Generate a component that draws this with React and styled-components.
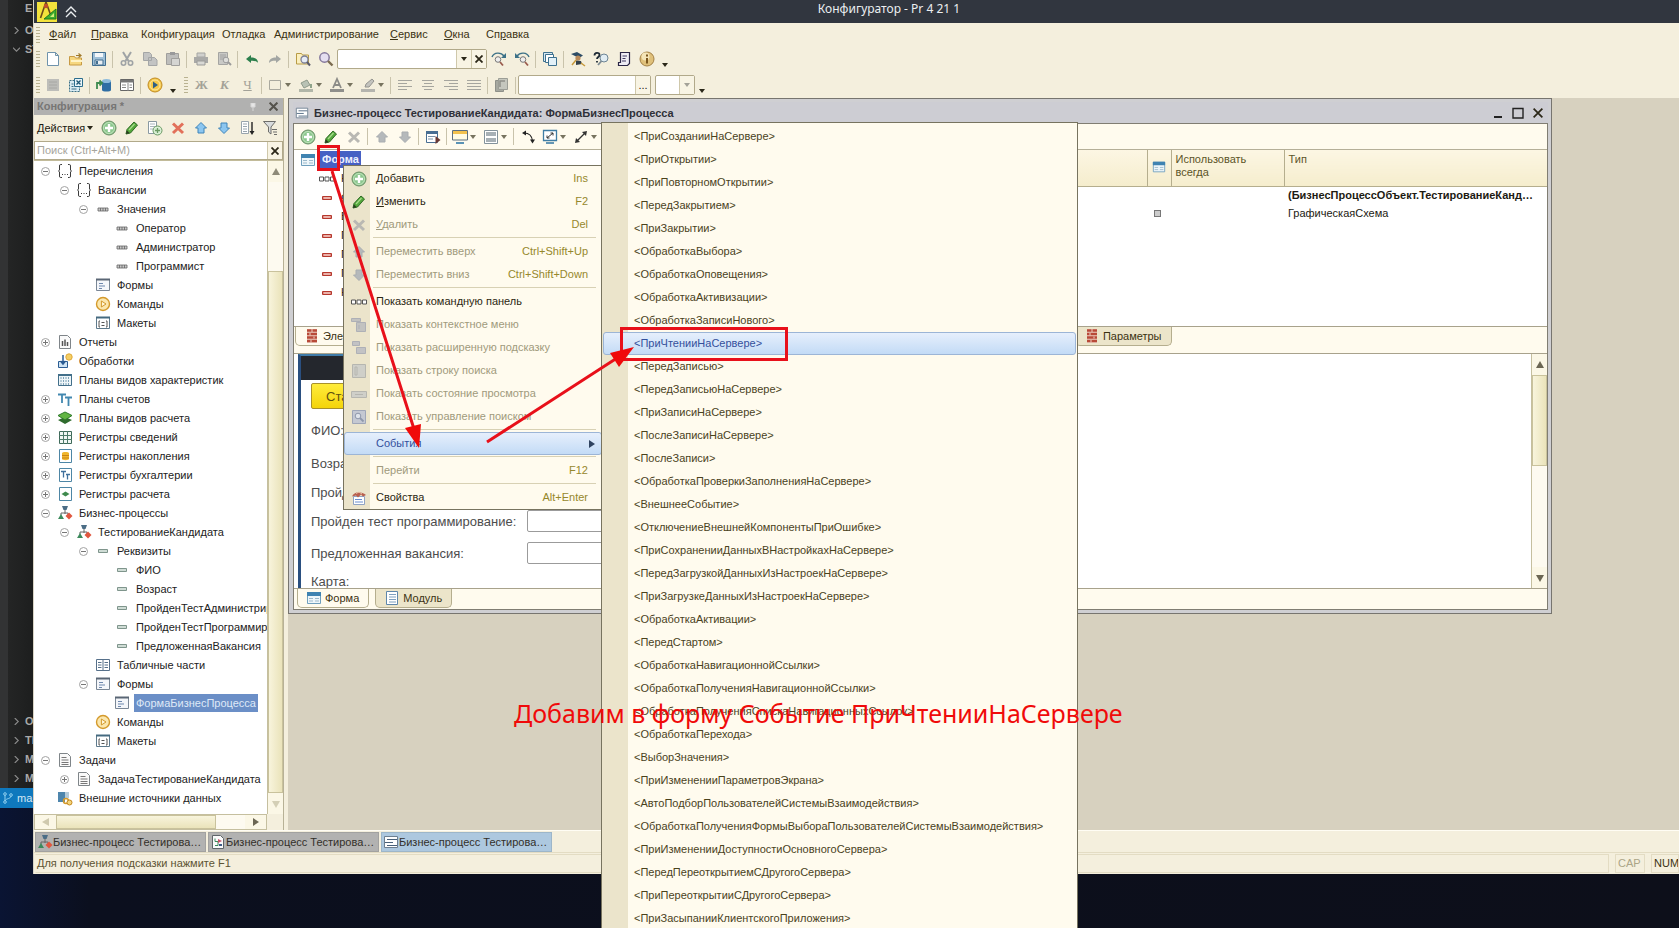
import React from "react";
import styled, { createGlobalStyle } from "styled-components";

const Global = createGlobalStyle`
  * { box-sizing: border-box; }
  html, body { margin: 0; height: 100%; overflow: hidden; }
  body { font: 11px/19px "Liberation Sans", Arial, sans-serif; color: #1c1a12; background: #0b0e19; }
  button, input { font: inherit; color: inherit; margin: 0; }
  ul { list-style: none; margin: 0; padding: 0; }
`;

/* ---------- icons ---------- */

const plusBall = (
  <>
    <circle cx="8" cy="8" r="7" fill="#8cc78e" stroke="#6b8f66" />
    <circle cx="8" cy="8" r="5.5" fill="none" stroke="#c2e4bd" />
    <path d="M8 4v8M4 8h8" stroke="#fff" strokeWidth="2.4" />
  </>
);
const goldBall = (
  <>
    <circle cx="8" cy="8" r="6.5" fill="#fbe7ae" stroke="#d49a2c" strokeWidth="1.4" />
    <path d="M6.4 5l4.6 3-4.6 3z" fill="#fff6d8" stroke="#d49a2c" />
  </>
);
const frame = (stroke, fill) => (
  <path d="M1.5 2.5h13v11h-13z" fill={fill} stroke={stroke} />
);
const process = (
  <>
    <path d="M8 5v4M4 10V8h7v2" stroke="#666" fill="none" />
    <path d="M5 1h6L9.500 5h-3z" fill="#4b6d86" />
    <path d="M1 14l3-5 3 5z" fill="#3c8a5c" />
    <path d="M12 7.500l3.500 3.500-3.500 3.500L8.500 11z" fill="#e0573f" />
  </>
);
const loupe = (
  <>
    <circle cx="9.500" cy="8.500" r="3.500" fill="#e6ecf6" stroke="#7d7f96" strokeWidth="1.3" />
    <path d="M12 11l3 3.500" stroke="#5b5b6b" strokeWidth="2" />
  </>
);

const ICONS = {
  newDoc: <path d="M2.500 1.500h8l3 3v10h-11zM10.500 1.500v3h3" fill="#fff" stroke="#6f93ac" />,
  open: (
    <>
      <path d="M1.500 5.500h5l1 1.500h6v7h-12z" fill="#f6d77f" stroke="#c79a45" />
      <path d="M3 10h11" stroke="#fff3c4" strokeWidth="2" />
      <path d="M8 4.500h4.500M10.500 2.500l2.500 2-2.500 2" fill="none" stroke="#a07a2b" strokeWidth="1.2" />
    </>
  ),
  save: (
    <>
      <path d="M1.500 1.500h13v13h-13z" fill="#9fc0d8" stroke="#426f90" />
      <path d="M4 2h8v4H4z" fill="#f3f7fa" />
      <path d="M4 9h8v5H4z" fill="#e8eef2" stroke="#426f90" />
      <path d="M6 10v3" stroke="#426f90" strokeWidth="2" />
    </>
  ),
  cut: (
    <>
      <path d="M4 1l5.500 9M12 1L6.500 10" stroke="#9fa3a5" strokeWidth="2" />
      <circle cx="4.500" cy="12" r="2.200" fill="none" stroke="#9fa3a5" strokeWidth="1.600" />
      <circle cx="11.500" cy="12" r="2.200" fill="none" stroke="#9fa3a5" strokeWidth="1.600" />
    </>
  ),
  copy: (
    <path d="M1.500 1.500h6l2 2v6h-8zM6.500 6.500h6l2.500 2.500v5.500H6.500z" fill="#c3c4c3" stroke="#a4a6a6" />
  ),
  paste: (
    <>
      <path d="M1.500 2.500h12v11h-12z" fill="#bdbdbb" stroke="#a09f9c" />
      <path d="M5 1h5v3H5z" fill="#99999a" />
      <path d="M6.500 7.500h8v7h-8z" fill="#d5d5d2" stroke="#a09f9c" />
    </>
  ),
  print: (
    <>
      <path d="M4 2h8v4H4z" fill="#d0d0cd" stroke="#a5a5a2" />
      <path d="M1 6h14v6H1z" fill="#a9a9a7" />
      <path d="M4 10h8v4H4z" fill="#d8d8d4" stroke="#9b9b98" />
    </>
  ),
  preview: (
    <>
      <path d="M2.500 1.500h9v12h-9z" fill="#c9c9c6" stroke="#a5a5a2" />
      <path d="M4 4h6M4 6h6M4 8h4" stroke="#a0a0a0" />
      <circle cx="10" cy="9" r="2.800" fill="#dededb" stroke="#9b9b9b" />
      <path d="M12 11l3 3" stroke="#9b9b9b" strokeWidth="2" />
    </>
  ),
  undo: <path d="M2 8l5-4v2.500c4 0 7 1.500 7 5.500-1.500-2-4-2.500-7-2.300V12z" fill="#2c7f4c" />,
  redo: <path d="M14 8L9 4v2.500c-4 0-7 1.500-7 5.500 1.500-2 4-2.500 7-2.300V12z" fill="#a3a6a3" />,
  findFolder: (
    <>
      <path d="M1.500 2.500h5l1 1.500h6v9h-12z" fill="#fbefbd" stroke="#b89b45" />
      {loupe}
    </>
  ),
  find: (
    <>
      <circle cx="6.500" cy="6.500" r="4.700" fill="#e4def0" stroke="#85799c" strokeWidth="1.500" />
      <path d="M10 10l4.500 4.500" stroke="#7b6c50" strokeWidth="2.400" />
    </>
  ),
  findNext: (
    <>
      <path d="M1 6c2-5 9-5 12-1" fill="none" stroke="#3c7187" strokeWidth="1.400" />
      <path d="M15 2v5h-5z" fill="#3c7187" />
      <circle cx="7" cy="8.500" r="2.800" fill="#eee" stroke="#777" />
      <path d="M9 11l3 3.500" stroke="#9a5b4c" strokeWidth="1.800" />
    </>
  ),
  findPrev: (
    <>
      <path d="M15 6C13 1 6 1 3 5" fill="none" stroke="#3c7187" strokeWidth="1.400" />
      <path d="M1 2v5h5z" fill="#3c7187" />
      <circle cx="9" cy="8.500" r="2.800" fill="#eee" stroke="#777" />
      <path d="M11 11l3 3.500" stroke="#9a5b4c" strokeWidth="1.800" />
    </>
  ),
  windows: (
    <>
      <path d="M1.500 1.500h9v9h-9z" fill="#d7e7f0" stroke="#3e718f" />
      <path d="M3.500 3.500h8v8h-8z" fill="#fff" stroke="#3e718f" />
      <path d="M6.500 6.500h8v8h-8z" fill="#e3f1f8" stroke="#3e718f" />
    </>
  ),
  wizard: (
    <>
      <path d="M1 3l6-2 6 3.500L9 7z" fill="#2d4c66" />
      <circle cx="8" cy="7" r="2.600" fill="#b98a5a" />
      <path d="M6 9.500l5 .5 1 3-6 1z" fill="#33404a" />
      <path d="M2 14l4-5M11 12l4 3" stroke="#c89a3c" strokeWidth="1.500" />
    </>
  ),
  helpFind: (
    <>
      <path d="M1.500 4.500c0-3.500 5-3.500 5-.5 0 2-2.500 2-2.500 4M4 10v1.500" fill="none" stroke="#1e2a35" strokeWidth="1.800" />
      <circle cx="11" cy="7" r="4" fill="#e1edf3" stroke="#6d8494" />
      <path d="M8.500 10l-3.500 4" stroke="#7d8b93" strokeWidth="1.800" />
    </>
  ),
  syntax: (
    <>
      <path d="M4.500 1.500h9v11l-2 2h-9v-3h2z" fill="#eeecf4" stroke="#2b2646" strokeWidth="1.200" />
      <path d="M6.500 5H11M6.500 7.500h3M6 10h4" stroke="#3f3960" />
    </>
  ),
  info: (
    <>
      <circle cx="8" cy="8" r="7" fill="#dfc07a" stroke="#a48145" />
      <circle cx="6.500" cy="5.500" r="4" fill="#f4e5b8" />
      <path d="M8 7v5.500M8 3.500v2" stroke="#7a561d" strokeWidth="2" />
    </>
  ),
  greyBox: (
    <>
      <path d="M2 2h12v12H2z" fill="#bdbdb9" />
      <path d="M4 5h8M4 8h8M4 11h8" stroke="#a8a8a4" />
    </>
  ),
  tableX: (
    <>
      <path d="M1.500 3.500h10v11h-10z" fill="#d9ebf2" stroke="#3a6f86" strokeDasharray="2 1" />
      <path d="M6.500 1.500h8v8h-8z" fill="#e9f4f8" stroke="#2b6d8d" />
      <path d="M8.500 3.500l4 4M12.500 3.500l-4 4" stroke="#1d5876" strokeWidth="1.300" />
      <path d="M3.500 7h2M3.500 9.500h2M3.500 12h5" stroke="#3a6f86" />
    </>
  ),
  database: (
    <>
      <path d="M6 4v9c0 2 9 2 9 0V4z" fill="#2f6ea4" />
      <ellipse cx="10.500" cy="4" rx="4.500" ry="2" fill="#8cbbdc" />
      <path d="M1 12V6h4M3.500 3.500L6 6 3.500 8.500" fill="none" stroke="#3e8b50" strokeWidth="1.800" />
    </>
  ),
  panelTable: (
    <>
      <path d="M1.500 2.500h13v11h-13z" fill="#fff" stroke="#666" />
      <path d="M1 3h14v2.500H1z" fill="#777" />
      <path d="M9 6v8M3 8h4M3 10.500h4M10.500 8H13M10.500 10.500H13" stroke="#888" />
    </>
  ),
  run: (
    <>
      <circle cx="8" cy="8" r="7" fill="#f4c84a" stroke="#c08a22" />
      <circle cx="8" cy="8" r="5" fill="none" stroke="#fbe8a5" />
      <path d="M6 4.500l5 3.500-5 3.500z" fill="#2c5f86" />
    </>
  ),
  rect: <path d="M2.500 3.500h11v9h-11z" fill="none" stroke="#aaa99f" />,
  bucket: (
    <>
      <path d="M3 6l6-3 3 5-6 3z" fill="#b9c2b5" stroke="#8f9a8b" />
      <path d="M13 7v4" stroke="#8fa48b" strokeWidth="2" />
      <path d="M1 12h14v3H1z" fill="#b1b6a8" />
    </>
  ),
  fontColor: (
    <>
      <path d="M4 11l4-9 4 9M5.500 8h5" fill="none" stroke="#8b8b87" strokeWidth="1.800" />
      <path d="M1 12h14v3H1z" fill="#8f8f8b" />
    </>
  ),
  penColor: (
    <>
      <path d="M5 10l1-3 6-5 2 2-5 6z" fill="#c3c3be" stroke="#94948f" />
      <path d="M1 12h14v3H1z" fill="#b4b4ae" />
    </>
  ),
  alignL: <path d="M1 3.500h14M1 6.500h9M1 9.500h14M1 12.500h9" stroke="#a5a59e" />,
  alignC: <path d="M2 3.500h12M4 6.500h8M2 9.500h12M4 12.500h8" stroke="#a5a59e" />,
  alignR: <path d="M1 3.500h14M6 6.500h9M1 9.500h14M6 12.500h9" stroke="#a5a59e" />,
  alignJ: <path d="M1 3.500h14M1 6.500h14M1 9.500h14M1 12.500h14" stroke="#a5a59e" />,
  stack: (
    <>
      <path d="M1.500 3.500h8v11h-8z" fill="#a6a8a0" stroke="#8e9089" />
      <path d="M4.500 1.500h9v11h-9z" fill="#c5c7be" stroke="#9c9e96" />
      <path d="M6 10V4h5" fill="none" stroke="#8e9089" strokeWidth="1.500" />
    </>
  ),
  add: plusBall,
  edit: (
    <>
      <path d="M2 14l1-4.500L10 2l3.500 3L6.500 13z" fill="#54a83c" stroke="#2f6a25" />
      <path d="M2 14l1-3.500 2.500 2.500z" fill="#2d3b22" />
      <path d="M5 10l5.500-6" stroke="#a8dc8c" strokeWidth="1.200" />
    </>
  ),
  addDoc: (
    <>
      <path d="M1.500 1.500h8v12h-8z" fill="#fff" stroke="#8a99a2" />
      <path d="M3 4h5M3 6.500h5M3 9h3" stroke="#a9b4bb" />
      <circle cx="10.500" cy="10.500" r="4.500" fill="#d9efd5" stroke="#6b9a64" />
      <path d="M10.500 8v5M8 10.500h5" stroke="#6b9a64" strokeWidth="1.300" />
    </>
  ),
  remove: <path d="M3 3.500l10 9.500M13 3.500L3 13" stroke="#e2705a" strokeWidth="3" />,
  removeOff: <path d="M3 3.500l10 9.500M13 3.500L3 13" stroke="#b9b8b3" strokeWidth="3" />,
  up: <path d="M8 2.500l5.500 5.500H11v5H5V8H2.500z" fill="#8cc6f0" stroke="#3f84b9" />,
  down: <path d="M8 13.500L2.500 8H5V3h6v5h2.500z" fill="#8cc6f0" stroke="#3f84b9" />,
  upOff: <path d="M8 2.500l5.500 5.500H11v5H5V8H2.500z" fill="#b5b9bb" stroke="#a9adb0" />,
  downOff: <path d="M8 13.500L2.500 8H5V3h6v5h2.500z" fill="#b5b9bb" stroke="#a9adb0" />,
  sort: (
    <>
      <path d="M2.500 1.500h7v12h-7z" fill="#fff" stroke="#98a4ad" />
      <path d="M4 4h4M4 6.500h4M4 9h4M4 11.500h4" stroke="#98a4ad" />
      <path d="M13 2v10" stroke="#222" strokeWidth="1.400" />
      <path d="M10.500 11h5L13 15z" fill="#222" />
    </>
  ),
  filter: (
    <>
      <path d="M1.500 1.500h12L9 7v7l-2.500-2V7z" fill="#d9dcdd" stroke="#6d6d6a" />
      <path d="M10 9.500h5M11 12h4M12 14.500h3" stroke="#6d6d6a" />
    </>
  ),
  formExec: (
    <>
      <path d="M1.500 2.500h11v11h-11z" fill="#fff" stroke="#486e93" />
      <path d="M1 2h12v3H1z" fill="#486e93" />
      <path d="M3 7.500h7M3 10h5" stroke="#7b93a9" />
      <path d="M10.500 7l5 4-5 4z" fill="#6a3a36" />
    </>
  ),
  screen: (
    <>
      <path d="M.5 1.500h15v9.500H.5z" fill="#fffbe2" stroke="#5b6f7f" />
      <path d="M1 2h14v3H1z" fill="#f2c14c" />
      <path d="M4 14h8" stroke="#5b93b5" strokeWidth="2" />
    </>
  ),
  layout: (
    <>
      <path d="M1.500 1.500h13v13h-13z" fill="#fff" stroke="#83929b" />
      <path d="M3 3h10v4H3zM3 9h10v4H3z" fill="#a7b0b5" />
    </>
  ),
  link: (
    <>
      <path d="M4 4c5 0 8 3 8.500 8" fill="none" stroke="#222" strokeWidth="1.200" />
      <path d="M2 4l4-2.500v5zM10 10.500h5l-2.500 4z" fill="#222" />
    </>
  ),
  fit: (
    <>
      <path d="M1.500 1.500h13v10h-13z" fill="#fff" stroke="#3f7da5" strokeWidth="1.300" />
      <path d="M5 9l6-5M5 6.500V9h2.500M8.500 4H11v2.500" fill="none" stroke="#333" />
      <path d="M4 14h8" stroke="#3f7da5" strokeWidth="1.600" />
    </>
  ),
  diag: (
    <>
      <path d="M4 12l8-8" stroke="#333" strokeWidth="1.300" />
      <path d="M2 14l1-5 4 4zM14 2l-1 5-4-4z" fill="#333" />
    </>
  ),
  form: (
    <>
      <path d="M1.500 2.500h13v11h-13z" fill="#eef6fa" stroke="#6f9fbd" />
      <path d="M1 2h14v4H1z" fill="#3f83b1" />
      <path d="M3 8.500h4M9 8.500h4M3 11h4M9 11h4" stroke="#9cb9cb" />
    </>
  ),
  formList: (
    <>
      {frame("#6d7f90", "#fff")}
      <path d="M4 5.500h10M2 8.500h8M4 11.500h10" stroke="#48607a" />
    </>
  ),
  braces: (
    <path
      d="M5 1.500H3.500Q2.500 1.500 2.500 3v4l-1 1 1 1v4q0 1.500 1 1.500H5M11 1.500h1.500q1 0 1 1.500v4l1 1-1 1v4q0 1.500-1 1.500H11M5 11.500h1M7.500 11.500h1M10 11.500h1"
      fill="none"
      stroke="#3c3c3c"
    />
  ),
  valueDots: <path d="M3 7h10v3H3zM5.500 7v3M8 7v3M10.500 7v3" fill="#c9c9c9" stroke="#666" strokeWidth=".8" />,
  attr: <path d="M3.500 6.500h9v3h-9z" fill="#cfdcd5" stroke="#7f958c" />,
  forms: (
    <>
      {frame("#7a8796", "#f4f6fa")}
      <path d="M1 2.500h14" stroke="#5a6675" strokeWidth="2" />
      <path d="M4 6.500h4M4 9h6M4 11.500h3" stroke="#6d87ad" />
    </>
  ),
  commands: goldBall,
  layouts: (
    <>
      {frame("#5f7a8c", "#fff")}
      <path d="M1 2.500h14" stroke="#456a80" strokeWidth="2" />
      <path d="M5 6H4v6h1M11 6h1v6h-1M6.500 7.500h3M6.500 10.500h3" fill="none" stroke="#555" />
    </>
  ),
  report: (
    <>
      <path d="M2.500 1.500h8l3 3v10h-11z" fill="#fafafa" stroke="#7f8589" />
      <path d="M5.500 12V7M8 12V5.500M10.500 12V8" stroke="#555" strokeWidth="1.500" />
    </>
  ),
  mapDoc: (
    <>
      <path d="M2.500 1.500h8l3 3v10h-11z" fill="#fafafa" stroke="#5f6569" />
      <path d="M5 4.500v3h3v4M5 11.500h3" fill="none" stroke="#3c8a5c" />
      <path d="M8 5l4 2-4 2z" fill="#c9506a" />
      <path d="M9 11h3" stroke="#3d5a86" strokeWidth="2" />
    </>
  ),
  processing: (
    <>
      <path d="M1.500 8.500h9v6h-9z" fill="#cfe4f4" stroke="#2a5c93" />
      <path d="M6 2v8M3.500 8L6 11l2.500-3" fill="none" stroke="#2a5c93" strokeWidth="1.500" />
      <circle cx="12" cy="4" r="3.200" fill="#f4cf66" stroke="#e0a93a" />
    </>
  ),
  grid: (
    <>
      {frame("#426f8a", "#eef5f8")}
      <path d="M1 3h14" stroke="#426f8a" strokeWidth="2" />
      <path d="M4 5v8M6.500 5v8M9 5v8M11.500 5v8" stroke="#7fa3b8" strokeDasharray="2 1" />
    </>
  ),
  accounts: <path d="M1 3.500h8M5 3v9M8 6.500h7M11.500 6v9" stroke="#4288b0" strokeWidth="1.800" fill="none" />,
  layers: (
    <>
      <path d="M8 7l7 3-7 4-7-4z" fill="#2f6b2d" />
      <path d="M8 2l7 3.500L8 10 1 5.500z" fill="#62b543" stroke="#2f7a2b" />
    </>
  ),
  regInfo: (
    <>
      <path d="M2.500 2.500h12v12h-12z" fill="#f1f7f4" stroke="#3f6a5a" />
      <path d="M2 6.500h13M2 10.500h13M6.500 2v13M10.500 2v13" stroke="#4d7a69" />
    </>
  ),
  regAcc: (
    <>
      <path d="M2.500 1.500h12v13h-12z" fill="#fff" stroke="#4e86a5" />
      <path d="M5 5c0-1.500 7-1.500 7 0v6c0 1.500-7 1.500-7 0z" fill="#f0b62e" />
      <path d="M5 7.500h7M5 10h7" stroke="#c98214" />
    </>
  ),
  regBook: (
    <>
      <path d="M2.500 1.500h12v13h-12z" fill="#fff" stroke="#4e86a5" />
      <path d="M4 4.500h5M6.500 4.500v6M9 7.500h4M10.500 7.500v5" stroke="#3f6f9b" strokeWidth="1.300" fill="none" />
    </>
  ),
  regCalc: (
    <>
      <path d="M2.500 1.500h12v13h-12z" fill="#fff" stroke="#4e86a5" />
      <path d="M8.500 5.500L12.500 8l-4 2.500L4.500 8z" fill="#3f8a4d" />
    </>
  ),
  process,
  tabular: (
    <>
      {frame("#56708a", "#fff")}
      <path d="M8 2v12M3 5.500h3.500M3 8h3.500M3 10.500h3.500M9.500 5.500H13M9.500 8H13M9.500 10.500H13" stroke="#56708a" />
    </>
  ),
  task: (
    <>
      <path d="M2.500 1.500h8l3 3v10h-11z" fill="#fafafa" stroke="#7f8589" />
      <path d="M4.500 5.500h5M4.500 8h7M4.500 10.500h7M4.500 12.500h7" stroke="#777" />
    </>
  ),
  external: (
    <>
      <path d="M1 2h7v10H1z" fill="#4e86ad" />
      <path d="M8 2h4v6H8z" fill="#b5cbd9" />
      <circle cx="9" cy="11" r="2.500" fill="none" stroke="#d49a2c" strokeWidth="1.500" />
      <circle cx="12.500" cy="12.500" r="2.500" fill="#f3d47c" stroke="#c4871a" />
    </>
  ),
  redDash: (
    <>
      <path d="M3.500 6.500h9v3h-9z" fill="#e08a80" stroke="#b5382e" />
      <path d="M5 8h6" stroke="#f6d9d4" />
    </>
  ),
  cmdBar: <path d="M.5 6h4v4h-4zM6 6h4v4H6zM11.500 6h4v4h-4z" fill="#fff" stroke="#555" />,
  bricks: (
    <>
      <path d="M3 1h10v14H3z" fill="#eccfc0" />
      <path d="M3 2.500h10M3 6h10M3 9.500h10M3 13h10" stroke="#b84a38" strokeWidth="2.400" />
      <path d="M8 1v3M6 5v2.500M10 8.500v2M7 12v2.500" stroke="#eccfc0" />
    </>
  ),
  module: (
    <>
      <path d="M2.500 1.500h11v13h-11z" fill="#fff" stroke="#5f87ab" />
      <path d="M5 4.500h7M5 7h7M5 9.500h7M5 12h7" stroke="#7fa0bf" />
    </>
  ),
  mContext: <path d="M.5 1.500h9v3h-9zM5.500 5.500h9v9h-9zM8 8v4" fill="#c2c2c0" stroke="#aeb0b6" />,
  mHint: <path d="M1.500 1.500h7v4h-7zM5.500 7.500h9v6h-9z" fill="#c2c2c4" stroke="#aeb0b6" />,
  mSearch: <path d="M1.500 1.500h13v13h-13zM4 4h2v8H4z" fill="#cfcfc9" stroke="#b6b6b0" />,
  mState: <path d="M.5 5.500h15v6H.5zM4 8.500h8" fill="#cfcfc9" stroke="#b6b6b0" />,
  mControl: (
    <>
      <path d="M1.500 1.500h13v13h-13z" fill="#c4c8d2" stroke="#9fa6b8" />
      <circle cx="7" cy="7" r="2.800" fill="#dfe3ea" stroke="#8e97ab" />
      <path d="M9 9l3.500 3.500" stroke="#8e97ab" strokeWidth="1.800" />
    </>
  ),
  props: (
    <>
      <path d="M2.500 6.500h11v8h-11z" fill="#fff" stroke="#8fa3c4" />
      <path d="M4 9.500h7M4 12h8" stroke="#6b8fd0" />
      <path d="M1 6.500c1.500-4 8-6.500 14-1.500l-3 1.500-2-2-3 3-2-2z" fill="#b8604f" />
      <path d="M5 3.500l3-1.500 3 2" fill="none" stroke="#e9c3a8" />
    </>
  ),
};

const Svg = styled.svg`
  width: ${(p) => p.$size || 16}px;
  height: ${(p) => p.$size || 16}px;
  flex: none;
  display: block;
`;
const Icon = ({ name, size }) => (
  <Svg viewBox="0 0 16 16" $size={size} aria-hidden="true">
    {ICONS[name]}
  </Svg>
);

const Caret = styled.i`
  flex: none;
  width: 0;
  height: 0;
  border: 3px solid transparent;
  border-top: 4px solid ${(p) => p.$color || "#2a2718"};
  border-bottom: 0;
`;

/* ---------- page and editor behind ---------- */

const Page = styled.div`
  position: relative;
  display: flex;
  height: 100vh;
  overflow: hidden;
  background: linear-gradient(90deg, #0a1433 0, #0b0f1e 90px, #0d0f1a 100%);
`;
const Editor = styled.aside`
  flex: none;
  width: 33px;
  height: calc(100vh - 120px);
  display: flex;
  flex-direction: column;
  overflow: hidden;
  background: linear-gradient(90deg, #323334 8px, #242525 8px, #1d1e1e 100%);
  color: #a9a9a9;
  font-weight: bold;
`;
const EditorRow = styled.div`
  flex: none;
  height: 19px;
  display: flex;
  align-items: center;
  gap: 5px;
  padding-left: 13px;
  white-space: nowrap;
  svg { color: #8a8a8a; }
`;
const EditorTab = styled(EditorRow)`
  height: 21px;
  padding: 0 0 4px 25px;
`;
const EditorGap = styled.div`
  flex: 1;
`;
const EditorStatus = styled(EditorRow)`
  height: 20px;
  padding-left: 2px;
  gap: 3px;
  background: #0f78bd;
  color: #d4e8f5;
  font-weight: normal;
  svg { color: #8fd0f0; }
`;
const Chevron = ({ open }) => (
  <Svg viewBox="0 0 8 8" $size={7} aria-hidden="true">
    <path d={open ? "M0 2l4 4 4-4" : "M2 0l4 4-4 4"} fill="none" stroke="currentColor" strokeWidth="1.300" />
  </Svg>
);

/* ---------- main window ---------- */

const AppWindow = styled.div`
  flex: 1;
  min-width: 0;
  height: calc(100vh - 54px);
  display: flex;
  flex-direction: column;
  background: #f4efdd;
  border-left: 1px solid #d8d4c6;
`;
const TitleBar = styled.header`
  flex: none;
  height: 23px;
  display: flex;
  align-items: center;
  padding-left: 3px;
  background: #31363f;
  color: #eceff1;
  font: 12px/16px "Noto Sans", sans-serif;
  gap: 8px;
`;
const WindowTitle = styled.h1`
  flex: 1;
  margin: 0;
  padding: 0 0 6px 14px;
  font: inherit;
  text-align: center;
`;
const MenuBar = styled.nav`
  flex: none;
  height: 23px;
  display: flex;
  align-items: center;
  padding-left: 2px;
  color: #3b3212;
`;
const MenuButton = styled.button`
  width: ${(p) => p.$w}px;
  padding: 0;
  border: 0;
  background: none;
  text-align: left;
  white-space: nowrap;
`;
const Grip = styled.i`
  flex: none;
  width: 4px;
  height: 16px;
  margin: ${(p) => p.$margin || "0 2px 0 0"};
  background: repeating-linear-gradient(#b9b290 0 1px, transparent 1px 3px);
`;
const Bar = styled.div`
  flex: none;
  height: ${(p) => p.$h || 26}px;
  display: flex;
  align-items: center;
  padding-left: ${(p) => p.$pad || 2}px;
  border-bottom: ${(p) => (p.$line ? "1px solid #b5af98" : "0")};
`;
const Tool = styled.button`
  flex: none;
  width: 23px;
  height: 22px;
  display: flex;
  align-items: center;
  justify-content: center;
  padding: 0;
  border: 0;
  background: none;
  color: #a3a298;
  font: ${(p) => p.$font || "bold 13px"} "Liberation Serif", serif;
`;
const DropTool = styled(Tool)`
  width: 31px;
  justify-content: flex-start;
  padding-left: 3px;
  gap: 2px;
`;
const MoreTool = styled(Tool)`
  width: 14px;
  align-items: flex-end;
  padding-bottom: 3px;
`;
const Sep = styled.i`
  flex: none;
  width: 1px;
  height: 17px;
  margin: 0 2px;
  background: #c9c3ab;
`;
const Combo = styled.div`
  flex: none;
  display: flex;
  width: ${(p) => p.$w}px;
  height: 20px;
  margin-right: ${(p) => p.$after || 0}px;
  border: 1px solid #b1a98a;
  border-radius: 2px;
  background: #fff;
`;
const ComboInput = styled.input`
  flex: 1;
  min-width: 0;
  padding: 0 2px;
  border: 0;
  outline: 0;
  background: none;
`;
const ComboButton = styled.button`
  flex: none;
  width: 15px;
  display: flex;
  align-items: center;
  justify-content: center;
  padding: 0;
  border: 0;
  border-left: 1px solid #cfc8ab;
  background: #f8f4e4;
`;
const Cross = ({ size = 8, color = "#2b2718", weight = 1.8 }) => (
  <Svg viewBox="0 0 8 8" $size={size} aria-hidden="true">
    <path d="M.5.5l7 7M7.500.5l-7 7" stroke={color} strokeWidth={weight} />
  </Svg>
);

const Workspace = styled.div`
  flex: 1;
  min-height: 0;
  display: flex;
`;

/* ---------- configuration panel ---------- */

const SidePanel = styled.section`
  flex: none;
  width: 250px;
  display: flex;
  flex-direction: column;
  margin-right: 4px;
  border-right: 1px solid #b7b196;
`;
const PanelTitle = styled.h2`
  flex: none;
  display: flex;
  align-items: center;
  gap: 12px;
  height: 17px;
  margin: 0;
  padding: 0 5px 0 3px;
  background: #b1b1b0;
  color: #777675;
  font: bold 11px/17px "Liberation Sans", sans-serif;
  span { flex: 1; }
`;
const ActionsButton = styled.button`
  width: 60px;
  display: flex;
  align-items: center;
  gap: 2px;
  padding: 0;
  border: 0;
  background: none;
  white-space: nowrap;
`;
const Search = styled(Combo)`
  width: auto;
  height: 19px;
  border-radius: 0;
  input::placeholder { color: #a6a59c; opacity: 1; }
`;
const TreeArea = styled.div`
  flex: 1;
  min-height: 0;
  display: flex;
  border-top: 1px solid #c2bb9a;
  background: #fff;
`;
const Tree = styled.ul`
  flex: 1;
  min-width: 0;
  overflow: hidden;
  color: #222;
`;
const TreeRow = styled.li`
  display: flex;
  align-items: center;
  height: 19px;
  padding-left: ${(p) => 4 + p.$level * 19}px;
  white-space: nowrap;
`;
const Expander = styled.button`
  flex: none;
  width: 14px;
  height: 14px;
  margin-right: 5px;
  padding: 0;
  border: 0;
  background: none;
  visibility: ${(p) => (p.$none ? "hidden" : "visible")};
`;
const NodeLabel = styled.span`
  margin-left: 4px;
  padding: 0 2px;
  line-height: 18px;
  color: ${(p) => (p.$selected ? "#dfe9f7" : "inherit")};
  background: ${(p) => (p.$selected ? "#6b8fc7" : "none")};
`;
const Node = ({ level, state, icon, label, selected }) => (
  <TreeRow $level={level}>
    <Expander $none={!state} aria-label={state === "+" ? "Развернуть" : "Свернуть"}>
      <Svg viewBox="0 0 14 14" $size={14}>
        <circle cx="7.500" cy="7.500" r="4" fill="#fff" stroke="#a3a3a3" />
        <path d={state === "+" ? "M5 7.500h5M7.500 5v5" : "M5 7.500h5"} stroke="#777" />
      </Svg>
    </Expander>
    <Icon name={icon} />
    <NodeLabel $selected={selected}>{label}</NodeLabel>
  </TreeRow>
);

const ScrollV = styled.div`
  flex: none;
  width: 16px;
  display: flex;
  flex-direction: column;
  border-left: 1px solid #c5bf9f;
  background: #fdfaf0;
`;
const ScrollH = styled.div`
  flex: none;
  height: 16px;
  display: flex;
  margin-right: 16px;
  border: 1px solid #c5bf9f;
  background: #fdfaf0;
`;
const Arrow = styled.button`
  flex: none;
  width: ${(p) => (p.$wide ? 21 : 15)}px;
  height: ${(p) => (p.$wide ? 14 : 21)}px;
  display: flex;
  align-items: center;
  justify-content: center;
  padding: 0;
  border: 0;
  background: #fbf7e6;
`;
const Thumb = styled.div`
  flex: none;
  border: 1px solid #c9c29c;
  width: ${(p) => p.$w || "auto"};
  height: ${(p) => p.$h || "auto"};
  background: linear-gradient(${(p) => (p.$w ? "180deg" : "90deg")}, #f8f4dc, #eae3ba);
`;
const Space = styled.div`
  flex: 1;
`;
const Tri = ({ d, color = "#6b6653" }) => (
  <Svg viewBox="0 0 8 8" $size={8} aria-hidden="true">
    <path d={d} fill={color} />
  </Svg>
);
const TRI = { up: "M0 7h8L4 0z", down: "M0 1h8L4 8z", left: "M7 0v8L0 4z", right: "M1 0v8l6-4z" };

/* ---------- child window ---------- */

const Mdi = styled.main`
  flex: 1;
  min-width: 0;
  display: flex;
  align-items: flex-start;
  background: #d7d1bf;
`;
const ChildWindow = styled.section`
  width: calc(100% - 127px);
  padding: 3px 3px 3px 4px;
  border: 1px solid #77756f;
  background: #cfcfd2;
`;
const ChildTitle = styled.h2`
  display: flex;
  align-items: center;
  height: 21px;
  margin: 0;
  padding: 0 0 0 2px;
  background: #cdcdd3;
  color: #2e3038;
  font: bold 11px/20px "Liberation Sans", sans-serif;
  span { flex: 1; padding-left: 5px; }
`;
const CaptionButton = styled.button`
  width: 20px;
  height: 18px;
  display: flex;
  align-items: center;
  justify-content: center;
  padding: 0;
  border: 0;
  background: none;
`;
const ChildBody = styled.div`
  border: 1px solid #807d72;
  background: #fffbee;
`;
const TopPanes = styled.div`
  display: flex;
  height: 229px;
`;
const Pane = styled.div`
  flex: ${(p) => p.$flex};
  min-width: 0;
  display: flex;
  flex-direction: column;
`;
const ElementList = styled.ul`
  flex: 1;
  padding-left: 6px;
  border-bottom: 1px solid #a8a28c;
  background: #fff;
`;
const ElementRow = styled.li`
  display: flex;
  align-items: center;
  gap: ${(p) => (p.$root ? 4 : 6)}px;
  height: 19px;
  padding-left: ${(p) => (p.$root ? 0 : 19)}px;
  white-space: nowrap;
`;
const Selected = styled.strong`
  padding: 0 2px;
  line-height: 17px;
  background: #4660c4;
  color: #eef1ff;
`;
const TabStrip = styled.div`
  flex: none;
  display: flex;
  align-items: flex-start;
  gap: 6px;
  height: ${(p) => p.$h}px;
  padding-left: ${(p) => p.$pad}px;
`;
const Tab = styled.button`
  display: flex;
  align-items: center;
  gap: 3px;
  height: 19px;
  padding: 0 9px 0 8px;
  border: 1px solid #b5ae8e;
  border-top: 0;
  border-radius: 0 0 5px 5px;
  background: ${(p) => (p.$active ? "#fffbee" : "#ece5ca")};
  color: #3b3212;
`;
const DataTable = styled.table`
  width: 100%;
  border-collapse: collapse;
  table-layout: fixed;
  th {
    height: 36px;
    padding: 3px 4px;
    border-right: 1px solid #b5ae8e;
    border-bottom: 1px solid #b5ae8e;
    background: linear-gradient(#fcf6e3, #f5edcd);
    font-weight: normal;
    line-height: 13px;
    text-align: left;
    vertical-align: top;
    color: #5c5428;
  }
  th:last-child { border-right: 0; }
  td {
    height: 19px;
    padding: 0 9px 0 4px;
    overflow: hidden;
    text-overflow: ellipsis;
    line-height: 17px;
    vertical-align: top;
    white-space: nowrap;
  }
  tr:first-child td { font-weight: bold; }
`;
const TableArea = styled.div`
  flex: 1;
  border-bottom: 1px solid #a8a28c;
  background: #fff;
`;
const IconHead = styled.div`
  display: flex;
  padding-top: 7px;
`;
const Check = styled.input`
  appearance: none;
  display: block;
  width: 7px;
  height: 7px;
  margin: 5px 3px;
  border: 1px solid #777;
  background: #ccc;
`;
const PreviewArea = styled.div`
  display: flex;
  height: 236px;
  border-top: 1px solid #a8a28c;
  border-bottom: 1px solid #a8a28c;
  background: #fff;
`;
const FormPreview = styled.form`
  width: 56%;
  margin-left: 4px;
  overflow: hidden;
  border-left: 3px solid #2a4f80;
  border-top: 2px solid #3f7ba8;
  color: #4d4d4d;
  font-size: 13px;
`;
const FormHeader = styled.div`
  height: 24px;
  margin-bottom: 3px;
  background: #24272d;
`;
const StartButton = styled.button`
  display: block;
  height: 26px;
  margin: 0 0 5px 10px;
  padding: 0 14px;
  border: 1px solid #a8912c;
  border-radius: 2px;
  background: linear-gradient(#ffec3c, #f4d40a);
  color: #5e4f10;
`;
const Field = styled.label`
  display: flex;
  align-items: center;
  height: ${(p) => p.$h}px;
  padding-left: 10px;
  white-space: nowrap;
  span { width: 216px; }
  input { width: 280px; height: 22px; border: 1px solid #9b9b9b; border-radius: 2px; }
`;

/* ---------- bottom bars ---------- */

const TaskBar = styled.div`
  flex: none;
  display: flex;
  gap: 2px;
  height: 22px;
  padding: 1px 0 0 1px;
  border-top: 1px solid #fffdf4;
`;
const TaskButton = styled.button`
  width: 171px;
  height: 20px;
  display: flex;
  align-items: center;
  padding: 0 1px;
  border: 1px solid ${(p) => (p.$active ? "#9db6c9" : "#a2a2a0")};
  background: ${(p) => (p.$active ? "#adc8df" : "#b2b2b1")};
  color: #33302a;
  span { flex: 1; overflow: hidden; text-overflow: ellipsis; white-space: nowrap; text-align: left; }
`;
const StatusBar = styled.footer`
  flex: none;
  display: flex;
  align-items: center;
  gap: 6px;
  height: 22px;
  padding: 0 0 1px 1px;
  border-top: 1px solid #e3dcc3;
  color: #5c5333;
`;
const StatusCell = styled.span`
  flex: ${(p) => (p.$grow ? 1 : "none")};
  width: ${(p) => p.$w || "auto"};
  height: 19px;
  padding-left: ${(p) => (p.$grow ? 1 : 2)}px;
  border: 1px solid #e3dcc3;
  border-left-color: ${(p) => (p.$grow ? "transparent" : "#e3dcc3")};
  line-height: 17px;
  color: ${(p) => p.$color || "inherit"};
  white-space: nowrap;
  overflow: hidden;
`;

/* ---------- popup menus ---------- */

const Popup = styled.ul`
  position: absolute;
  border: 1px solid #77735f;
  background: linear-gradient(90deg, #ebe4cb ${(p) => p.$gutter}px, #fffbee ${(p) => p.$gutter}px);
`;
const ContextMenu = styled(Popup)`
  left: 343px;
  top: 165px;
  width: 260px;
  padding: 1px 0 0;
`;
const EventMenu = styled(Popup)`
  left: 601px;
  top: 122px;
  bottom: 0;
  width: 477px;
  padding: 2px 1px 0;
  overflow: hidden;
  border-bottom: 0;
`;
const MenuItem = styled.button`
  width: 100%;
  height: 23px;
  display: flex;
  align-items: center;
  padding: 0 ${(p) => (p.$hot ? 5 : 13)}px 0 6px;
  border: 1px solid ${(p) => (p.$hot ? "#9cb5d6" : "transparent")};
  border-radius: 3px;
  background: ${(p) => (p.$hot ? "linear-gradient(#e6effc, #c3dbf6)" : "none")};
  color: ${(p) => (p.$hot ? "#34509c" : p.$off ? "#a09a7c" : "#2c2712")};
  text-align: left;
  white-space: nowrap;
  kbd { font: inherit; color: #96882c; }
`;
const MenuIcon = styled.i`
  flex: none;
  width: 25px;
`;
const MenuText = styled.span`
  flex: 1;
`;
const EventItem = styled(MenuItem)`
  padding-left: 30px;
  color: ${(p) => (p.$hot ? "#34509c" : "#4a421c")};
`;
const Rule = styled.li`
  height: 1px;
  margin: 1px 6px 2px 29px;
  background: #d8d1b4;
`;

/* ---------- annotations ---------- */

const Marks = styled.svg`
  position: absolute;
  left: 0;
  top: 0;
  width: 100%;
  height: 100%;
  pointer-events: none;
`;
const Caption = styled.p`
  position: absolute;
  left: 514px;
  top: 696px;
  margin: 0;
  color: #f00a0a;
  font: 25px/34px "Noto Sans", sans-serif;
  white-space: nowrap;
`;

/* ---------- data ---------- */

const MENUS = [
  [42, "", "Ф", "айл"],
  [50, "", "П", "равка"],
  [81, "Конфигурация"],
  [52, "Отладка"],
  [116, "Администрирование"],
  [54, "", "С", "ервис"],
  [42, "", "О", "кна"],
  [60, "Сп", "р", "авка"],
];

const TREE = [
  [0, "-", "braces", "Перечисления"],
  [1, "-", "braces", "Вакансии"],
  [2, "-", "valueDots", "Значения"],
  [3, "", "valueDots", "Оператор"],
  [3, "", "valueDots", "Администратор"],
  [3, "", "valueDots", "Программист"],
  [2, "", "forms", "Формы"],
  [2, "", "commands", "Команды"],
  [2, "", "layouts", "Макеты"],
  [0, "+", "report", "Отчеты"],
  [0, "", "processing", "Обработки"],
  [0, "", "grid", "Планы видов характеристик"],
  [0, "+", "accounts", "Планы счетов"],
  [0, "+", "layers", "Планы видов расчета"],
  [0, "+", "regInfo", "Регистры сведений"],
  [0, "+", "regAcc", "Регистры накопления"],
  [0, "+", "regBook", "Регистры бухгалтерии"],
  [0, "+", "regCalc", "Регистры расчета"],
  [0, "-", "process", "Бизнес-процессы"],
  [1, "-", "process", "ТестированиеКандидата"],
  [2, "-", "attr", "Реквизиты"],
  [3, "", "attr", "ФИО"],
  [3, "", "attr", "Возраст"],
  [3, "", "attr", "ПройденТестАдминистрирование"],
  [3, "", "attr", "ПройденТестПрограммирование"],
  [3, "", "attr", "ПредложеннаяВакансия"],
  [2, "", "tabular", "Табличные части"],
  [2, "-", "forms", "Формы"],
  [3, "", "forms", "ФормаБизнесПроцесса", true],
  [2, "", "commands", "Команды"],
  [2, "", "layouts", "Макеты"],
  [0, "-", "task", "Задачи"],
  [1, "+", "task", "ЗадачаТестированиеКандидата"],
  [0, "", "external", "Внешние источники данных"],
];

const ELEMENTS = [
  ["cmdBar", "Командная панель"],
  ["redDash", "ФИО"],
  ["redDash", "Возраст"],
  ["redDash", "ПройденТестАдминистрирование"],
  ["redDash", "ПройденТестПрограммирование"],
  ["redDash", "ПредложеннаяВакансия"],
  ["redDash", "КартаМаршрута"],
];

const FIELDS = [
  [33, "ФИО:"],
  [32, "Возраст:"],
  [26, "Пройден тест администрирование:"],
  [32, "Пройден тест программирование:"],
  [32, "Предложенная вакансия:"],
];

const ACTIONS = [
  { icon: "add", key: "Д", text: "обавить", hint: "Ins" },
  { icon: "edit", key: "И", text: "зменить", hint: "F2" },
  { icon: "removeOff", key: "У", text: "далить", hint: "Del", off: true },
  null,
  { icon: "upOff", text: "Переместить вверх", hint: "Ctrl+Shift+Up", off: true },
  { icon: "downOff", text: "Переместить вниз", hint: "Ctrl+Shift+Down", off: true },
  null,
  { icon: "cmdBar", text: "Показать командную панель" },
  { icon: "mContext", text: "Показать контекстное меню", off: true },
  { icon: "mHint", text: "Показать расширенную подсказку", off: true },
  { icon: "mSearch", text: "Показать строку поиска", off: true },
  { icon: "mState", text: "Показать состояние просмотра", off: true },
  { icon: "mControl", text: "Показать управление поиском", off: true },
  null,
  { text: "События", hot: true },
  null,
  { text: "Перейти", hint: "F12", off: true },
  null,
  { icon: "props", text: "Свойства", hint: "Alt+Enter" },
];

const EVENTS = [
  "ПриСозданииНаСервере",
  "ПриОткрытии",
  "ПриПовторномОткрытии",
  "ПередЗакрытием",
  "ПриЗакрытии",
  "ОбработкаВыбора",
  "ОбработкаОповещения",
  "ОбработкаАктивизации",
  "ОбработкаЗаписиНового",
  "ПриЧтенииНаСервере",
  "ПередЗаписью",
  "ПередЗаписьюНаСервере",
  "ПриЗаписиНаСервере",
  "ПослеЗаписиНаСервере",
  "ПослеЗаписи",
  "ОбработкаПроверкиЗаполненияНаСервере",
  "ВнешнееСобытие",
  "ОтключениеВнешнейКомпонентыПриОшибке",
  "ПриСохраненииДанныхВНастройкахНаСервере",
  "ПередЗагрузкойДанныхИзНастроекНаСервере",
  "ПриЗагрузкеДанныхИзНастроекНаСервере",
  "ОбработкаАктивации",
  "ПередСтартом",
  "ОбработкаНавигационнойСсылки",
  "ОбработкаПолученияНавигационнойСсылки",
  "ОбработкаПолученияСпискаНавигационныхСсылок",
  "ОбработкаПерехода",
  "ВыборЗначения",
  "ПриИзмененииПараметровЭкрана",
  "АвтоПодборПользователейСистемыВзаимодействия",
  "ОбработкаПолученияФормыВыбораПользователейСистемыВзаимодействия",
  "ПриИзмененииДоступностиОсновногоСервера",
  "ПередПереоткрытиемСДругогоСервера",
  "ПриПереоткрытииСДругогоСервера",
  "ПриЗасыпанииКлиентскогоПриложения",
];

/* "|" is a divider, a trailing "*" marks a button with a drop-down arrow */
const Tools = ({ list }) =>
  list.map((name, i) => {
    if (name === "|") return <Sep key={i} />;
    if (name.endsWith("*")) {
      return (
        <DropTool key={i} aria-label={name.slice(0, -1)}>
          <Icon name={name.slice(0, -1)} />
          <Caret $color="#77735f" />
        </DropTool>
      );
    }
    return (
      <Tool key={i} aria-label={name}>
        <Icon name={name} />
      </Tool>
    );
  });

const More = () => (
  <MoreTool aria-label="Ещё">
    <Caret />
  </MoreTool>
);

function Toolbars() {
  return (
    <>
      <MenuBar>
        <Grip $margin="0 9px 0 0" />
        {MENUS.map(([w, a, key, b]) => (
          <MenuButton key={a + key} $w={w}>
            {a}
            {key && <u>{key}</u>}
            {b}
          </MenuButton>
        ))}
      </MenuBar>
      <Bar>
        <Grip $margin="0 1px 0 0" />
        <Tools list={["newDoc", "open", "save", "|", "cut", "copy", "paste", "|", "print", "preview", "|", "undo", "redo", "|", "findFolder", "find"]} />
        <Combo $w={150}>
          <ComboInput aria-label="Найти" />
          <ComboButton aria-label="Список">
            <Caret />
          </ComboButton>
          <ComboButton aria-label="Очистить">
            <Cross />
          </ComboButton>
        </Combo>
        <Tools list={["findNext", "findPrev", "|", "windows", "|", "wizard", "helpFind", "syntax", "info"]} />
        <More />
      </Bar>
      <Bar>
        <Grip $margin="0 1px 0 0" />
        <Tools list={["greyBox", "tableX", "|", "database", "panelTable", "|", "run"]} />
        <More />
        <Grip $margin="0 2px 0 4px" />
        <Tool>Ж</Tool>
        <Tool $font="italic bold 13px">К</Tool>
        <Tool $font="13px">
          <u>Ч</u>
        </Tool>
        <Tools list={["|", "rect*", "bucket*", "fontColor*", "penColor*", "|", "alignL", "alignC", "alignR", "alignJ", "|", "stack", "|"]} />
        <Combo $w={133} $after={4}>
          <ComboInput aria-label="Шрифт" />
          <ComboButton aria-label="Выбрать шрифт">...</ComboButton>
        </Combo>
        <Combo $w={40}>
          <ComboInput aria-label="Размер" />
          <ComboButton aria-label="Размеры">
            <Caret $color="#a3a298" />
          </ComboButton>
        </Combo>
        <More />
      </Bar>
    </>
  );
}

function ConfigurationPanel() {
  return (
    <SidePanel>
      <PanelTitle>
        <span>Конфигурация *</span>
        <Svg viewBox="0 0 8 8" $size={8} aria-hidden="true">
          <path d="M2 0h4v4H2zM4 4v4" fill="#e6e6e6" stroke="#d8d8d8" />
        </Svg>
        <Cross size={9} color="#55534c" />
      </PanelTitle>
      <Bar $pad={3}>
        <ActionsButton>
          Действия
          <Caret />
        </ActionsButton>
        <Tools list={["add", "edit", "addDoc", "remove", "up", "down", "sort", "filter"]} />
      </Bar>
      <Search>
        <ComboInput placeholder="Поиск (Ctrl+Alt+M)" aria-label="Поиск" />
        <ComboButton aria-label="Очистить поиск">
          <Cross />
        </ComboButton>
      </Search>
      <TreeArea>
        <Tree>
          {TREE.map(([level, state, icon, label, selected], i) => (
            <Node key={i} level={level} state={state} icon={icon} label={label} selected={selected} />
          ))}
        </Tree>
        <ScrollV>
          <Arrow aria-label="Вверх">
            <Tri d={TRI.up} color="#8e8a78" />
          </Arrow>
          <Space />
          <Thumb $h="80%" />
          <Arrow aria-label="Вниз">
            <Tri d={TRI.down} color="#d4cfb6" />
          </Arrow>
        </ScrollV>
      </TreeArea>
      <ScrollH>
        <Arrow $wide aria-label="Влево">
          <Tri d={TRI.left} color="#cfc9ae" />
        </Arrow>
        <Thumb $w="160px" />
        <Space />
        <Arrow $wide aria-label="Вправо">
          <Tri d={TRI.right} />
        </Arrow>
      </ScrollH>
    </SidePanel>
  );
}

function FormWindow() {
  return (
    <ChildWindow>
      <ChildTitle>
        <Icon name="formList" size={14} />
        <span>Бизнес-процесс ТестированиеКандидата: ФормаБизнесПроцесса</span>
        <CaptionButton aria-label="Свернуть">
          <Svg viewBox="0 0 12 12" $size={12}>
            <path d="M2 10h8" stroke="#222" strokeWidth="2" />
          </Svg>
        </CaptionButton>
        <CaptionButton aria-label="Развернуть">
          <Svg viewBox="0 0 12 12" $size={12}>
            <path d="M1 1.500h10v9.500H1z" fill="none" stroke="#222" strokeWidth="1.400" />
          </Svg>
        </CaptionButton>
        <CaptionButton aria-label="Закрыть">
          <Cross size={10} weight={1.4} />
        </CaptionButton>
      </ChildTitle>
      <ChildBody>
        <TopPanes>
          <Pane $flex="1">
            <Bar $line>
              <Tools list={["add", "edit", "removeOff", "|", "upOff", "downOff", "|", "formExec", "|", "screen*", "layout*", "|", "link", "fit*", "diag*"]} />
            </Bar>
            <ElementList>
              <ElementRow $root>
                <Icon name="form" />
                <Selected>Форма</Selected>
              </ElementRow>
              {ELEMENTS.map(([icon, text]) => (
                <ElementRow key={text}>
                  <Icon name={icon} />
                  {text}
                </ElementRow>
              ))}
            </ElementList>
            <TabStrip $h={26} $pad={1}>
              <Tab $active>
                <Icon name="bricks" />
                Элементы
              </Tab>
            </TabStrip>
          </Pane>
          <Pane $flex="0 0 38%">
            <Bar $line />
            <TableArea>
              <DataTable>
                <colgroup>
                  <col />
                  <col width="24" />
                  <col width="113" />
                  <col width="263" />
                </colgroup>
                <thead>
                  <tr>
                    <th />
                    <th>
                      <IconHead>
                        <Icon name="form" size={14} />
                      </IconHead>
                    </th>
                    <th>Использовать всегда</th>
                    <th>Тип</th>
                  </tr>
                </thead>
                <tbody>
                  <tr>
                    <td />
                    <td />
                    <td />
                    <td>(БизнесПроцессОбъект.ТестированиеКандидата)</td>
                  </tr>
                  <tr>
                    <td />
                    <td>
                      <Check type="checkbox" aria-label="Использовать всегда" />
                    </td>
                    <td />
                    <td>ГрафическаяСхема</td>
                  </tr>
                </tbody>
              </DataTable>
            </TableArea>
            <TabStrip $h={26} $pad={4}>
              <Tab>
                <Icon name="bricks" />
                Параметры
              </Tab>
            </TabStrip>
          </Pane>
        </TopPanes>
        <PreviewArea>
          <FormPreview>
            <FormHeader />
            <StartButton type="button">Стартовать и закрыть</StartButton>
            {FIELDS.map(([h, text]) => (
              <Field key={text} $h={h}>
                <span>{text}</span>
                <input />
              </Field>
            ))}
            <Field as="div" $h={24}>
              Карта:
            </Field>
          </FormPreview>
          <Space />
          <ScrollV>
            <Arrow aria-label="Вверх">
              <Tri d={TRI.up} />
            </Arrow>
            <Thumb $h="91px" />
            <Space />
            <Arrow aria-label="Вниз">
              <Tri d={TRI.down} />
            </Arrow>
          </ScrollV>
        </PreviewArea>
        <TabStrip $h={20} $pad={3}>
          <Tab $active>
            <Icon name="form" />
            Форма
          </Tab>
          <Tab>
            <Icon name="module" />
            Модуль
          </Tab>
        </TabStrip>
      </ChildBody>
    </ChildWindow>
  );
}

function Menus() {
  return (
    <>
      <ContextMenu $gutter={26}>
        {ACTIONS.map((a, i) =>
          a ? (
            <li key={i}>
              <MenuItem $off={a.off} $hot={a.hot}>
                <MenuIcon>{a.icon && <Icon name={a.icon} />}</MenuIcon>
                <MenuText>
                  {a.key && <u>{a.key}</u>}
                  {a.text}
                </MenuText>
                {a.hint && <kbd>{a.hint}</kbd>}
                {a.hot && <Tri d={TRI.right} color="#2f4360" />}
              </MenuItem>
            </li>
          ) : (
            <Rule key={i} />
          )
        )}
      </ContextMenu>
      <EventMenu $gutter={26}>
        {EVENTS.map((name) => (
          <li key={name}>
            <EventItem $hot={name === "ПриЧтенииНаСервере"}>{`<${name}>`}</EventItem>
          </li>
        ))}
      </EventMenu>
    </>
  );
}

export default function App() {
  return (
    <>
      <Global />
      <Page>
        <Editor>
          <EditorTab>E</EditorTab>
          <EditorRow>
            <Chevron />O
          </EditorRow>
          <EditorRow>
            <Chevron open />
            ST
          </EditorRow>
          <EditorGap />
          {["O", "TI", "M", "M"].map((t, i) => (
            <EditorRow key={i}>
              <Chevron />
              {t}
            </EditorRow>
          ))}
          <EditorStatus>
            <Svg viewBox="0 0 12 12" $size={12} aria-hidden="true">
              <path d="M3 3v6M9 4c0 3-5 2-6 5" fill="none" stroke="currentColor" />
              <circle cx="3" cy="2" r="1.300" fill="none" stroke="currentColor" />
              <circle cx="9" cy="3" r="1.300" fill="none" stroke="currentColor" />
              <circle cx="3" cy="10" r="1.300" fill="none" stroke="currentColor" />
            </Svg>
            ma
          </EditorStatus>
        </Editor>
        <AppWindow>
          <TitleBar>
            <Svg viewBox="0 0 20 20" $size={20} aria-hidden="true">
              <path d="M0 0h20v20H0z" fill="#f3e23c" />
              <path d="M9 0L3.500 16M9 0l5 14" stroke="#6b4a1b" strokeWidth="1.600" />
              <circle cx="9" cy="4" r="2.200" fill="#c2502d" />
              <path d="M7 17h12V7z" fill="#3fae2f" stroke="#1f7a1a" />
              <path d="M13 15h4v-4z" fill="#d6ef7a" />
            </Svg>
            <Svg viewBox="0 0 12 12" $size={12} aria-hidden="true">
              <path d="M1 6l5-5 5 5M1 11l5-5 5 5" fill="none" stroke="#eceff1" strokeWidth="1.400" />
            </Svg>
            <WindowTitle>Конфигуратор - Pr 4 21 1</WindowTitle>
          </TitleBar>
          <Toolbars />
          <Workspace>
            <ConfigurationPanel />
            <Mdi>
              <FormWindow />
            </Mdi>
          </Workspace>
          <TaskBar>
            <TaskButton>
              <Icon name="process" />
              <span>Бизнес-процесс ТестированиеКандидата</span>
            </TaskButton>
            <TaskButton>
              <Icon name="mapDoc" />
              <span>Бизнес-процесс ТестированиеКандидата</span>
            </TaskButton>
            <TaskButton $active>
              <Icon name="formList" />
              <span>Бизнес-процесс ТестированиеКандидата</span>
            </TaskButton>
          </TaskBar>
          <StatusBar>
            <StatusCell $grow>Для получения подсказки нажмите F1</StatusCell>
            <StatusCell $w="30px" $color="#aba486">
              CAP
            </StatusCell>
            <StatusCell $w="28px" $color="#3b3212">
              NUM
            </StatusCell>
          </StatusBar>
        </AppWindow>
        <Menus />
        <Marks aria-hidden="true">
          <g fill="none" stroke="#e8101a" strokeWidth="3">
            <path d="M318.500 146.500h20v23h-20z" />
            <path d="M621.500 328.500h165v31h-165z" />
            <path d="M332 171l82 258M487 442l130-84" />
          </g>
          <path d="M419 448l-14-20 16-4zM634 347l-15 20-9-14z" fill="#f00a0a" />
        </Marks>
        <Caption>Добавим в форму Событие ПриЧтенииНаСервере</Caption>
      </Page>
    </>
  );
}
